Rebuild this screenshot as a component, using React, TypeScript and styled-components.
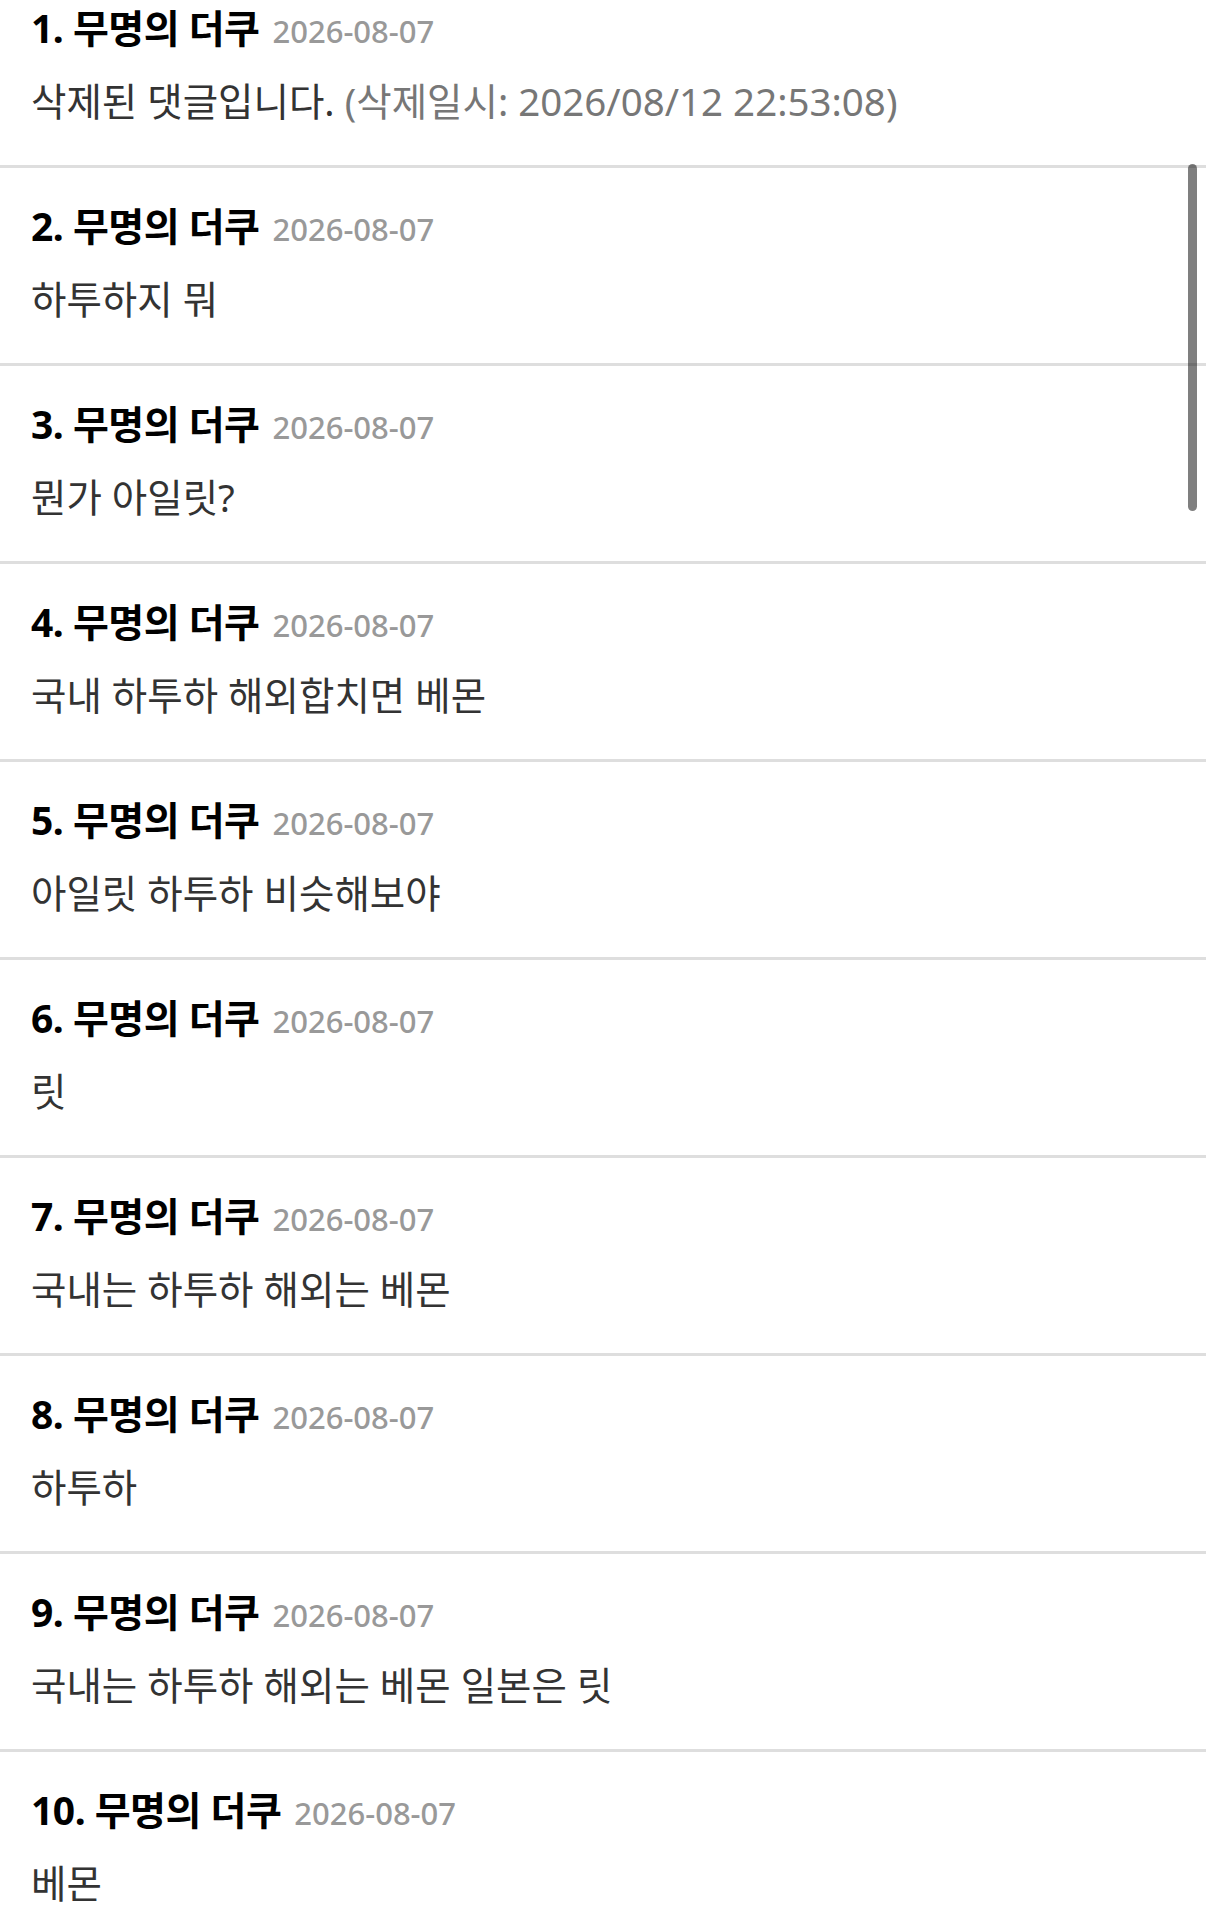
import React from "react";
import styled, { createGlobalStyle } from "styled-components";

const GlobalStyle = createGlobalStyle`
  html, body {
    margin: 0;
    padding: 0;
    background: #ffffff;
    overflow: hidden;
  }
  body {
    font-family: "Noto Sans", "Noto Sans CJK KR", sans-serif;
  }
`;

const Viewport = styled.div`
  position: relative;
  width: 1206px;
  height: 1929px;
  overflow: hidden;
  background: #ffffff;
`;

const List = styled.ul`
  list-style: none;
  margin: -30px 0 0 0;
  padding: 0;
  display: flex;
  flex-direction: column;
`;

const Row = styled.li`
  display: flex;
  flex-direction: column;
  box-sizing: border-box;
  height: 198px;
  padding: 37px 30px 0 31px;
  border-bottom: 3px solid #dedede;
`;

const Header = styled.div`
  display: flex;
  align-items: baseline;
  gap: 13px;
  height: 42px;
  line-height: 42px;
  white-space: nowrap;
`;

const Author = styled.span`
  font-family: "Noto Sans", "Noto Sans CJK KR", sans-serif;
  font-size: 39px;
  font-weight: 700;
  color: #000000;
  letter-spacing: -0.5px;
`;

const DateText = styled.span`
  font-family: "Noto Sans", "Noto Sans CJK KR", sans-serif;
  font-size: 31px;
  font-weight: 500;
  color: #999999;
`;

const Body = styled.p`
  margin: 31px 0 0 0;
  font-family: "Noto Sans", "Noto Sans CJK KR", sans-serif;
  font-size: 38.5px;
  line-height: 42px;
  color: #333333;
  white-space: nowrap;
`;

const Muted = styled.span`
  color: #777777;
`;

const ScrollThumb = styled.div`
  position: absolute;
  top: 164px;
  right: 9px;
  width: 9px;
  height: 347px;
  border-radius: 5px;
  background: rgba(0, 0, 0, 0.5);
`;

type Comment = {
  n: number;
  date: string;
  text: string;
  deletedAt?: string;
};

const comments: Comment[] = [
  { n: 1, date: "2026-08-07", text: "삭제된 댓글입니다.", deletedAt: "2026/08/12 22:53:08" },
  { n: 2, date: "2026-08-07", text: "하투하지 뭐" },
  { n: 3, date: "2026-08-07", text: "뭔가 아일릿?" },
  { n: 4, date: "2026-08-07", text: "국내 하투하 해외합치면 베몬" },
  { n: 5, date: "2026-08-07", text: "아일릿 하투하 비슷해보야" },
  { n: 6, date: "2026-08-07", text: "릿" },
  { n: 7, date: "2026-08-07", text: "국내는 하투하 해외는 베몬" },
  { n: 8, date: "2026-08-07", text: "하투하" },
  { n: 9, date: "2026-08-07", text: "국내는 하투하 해외는 베몬 일본은 릿" },
  { n: 10, date: "2026-08-07", text: "베몬" },
];

export default function App() {
  return (
    <Viewport>
      <GlobalStyle />
      <List>
        {comments.map((c) => (
          <Row key={c.n}>
            <Header>
              <Author>
                {c.n}. 무명의 더쿠
              </Author>
              <DateText>{c.date}</DateText>
            </Header>
            <Body>
              {c.text}
              {c.deletedAt && <Muted> (삭제일시: {c.deletedAt})</Muted>}
            </Body>
          </Row>
        ))}
      </List>
      <ScrollThumb />
    </Viewport>
  );
}
